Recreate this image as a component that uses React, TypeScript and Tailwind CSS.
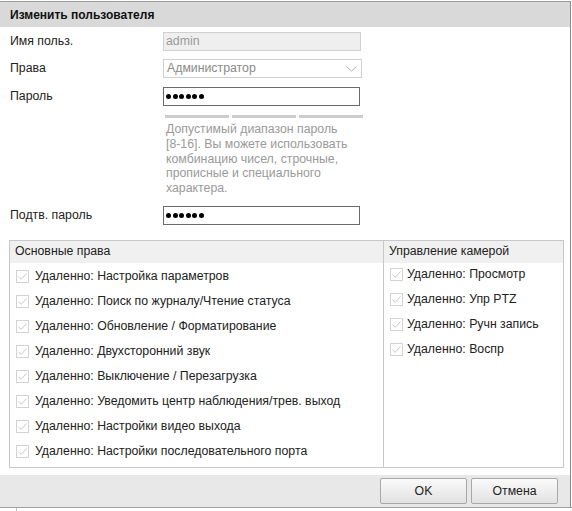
import React from "react";

const basicRights = [
    "Удаленно: Настройка параметров",
    "Удаленно: Поиск по журналу/Чтение статуса",
    "Удаленно: Обновление / Форматирование",
    "Удаленно: Двухсторонний звук",
    "Удаленно: Выключение / Перезагрузка",
    "Удаленно: Уведомить центр наблюдения/трев. выход",
    "Удаленно: Настройки видео выхода",
    "Удаленно: Настройки последовательного порта",
];

const cameraRights = [
    "Удаленно: Просмотр",
    "Удаленно: Упр PTZ",
    "Удаленно: Ручн запись",
    "Удаленно: Воспр",
];

function Check() {
    return (
        <span className="w-[13px] h-[13px] shrink-0 border border-[#d2d2d2] bg-white flex items-center justify-center">
            <svg width="11" height="11" viewBox="0 0 11 11" fill="none">
                <path d="M1.5 5.8 L4.2 8.3 L9.5 2.5" stroke="#c8c8c8" strokeWidth="1" />
            </svg>
        </span>
    );
}

function Dots() {
    return (
        <div className="flex items-center gap-[1.5px] pl-[2px]">
            {[0, 1, 2, 3, 4, 5].map((i) => (
                <span key={i} className="w-[5px] h-[5px] rounded-full bg-black" />
            ))}
        </div>
    );
}

function Row({ label, children }: { label: string; children: React.ReactNode }) {
    return (
        <div className="flex items-center h-[19px]">
            <div className="w-[163px] pl-[10px] text-[#222]">{label}</div>
            {children}
        </div>
    );
}

export default function App() {
    return (
        <div
            className="w-[572px] h-[511px] bg-white overflow-hidden text-[12.3px] leading-[15px] text-[#222]"
            style={{ fontFamily: '"Liberation Sans", Arial, sans-serif' }}
        >
            <div className="mt-[1px] border-t border-[#9a9a9a] border-r w-[571px] h-[506px] border-r-[#8a8a8a] flex flex-col">
                {/* Header */}
                <div className="h-[25px] bg-[#d9d9d9] flex items-center pl-[10px] pt-[1px] font-bold text-[12px] text-[#111]">
                    Изменить пользователя
                </div>

                {/* Form */}
                <div className="mt-[5px] flex flex-col">
                    <Row label="Имя польз.">
                        <div className="w-[198px] h-[19px] bg-[#efefef] border border-[#d0d0d0] flex items-center pl-[2px] text-[#9a9a9a]">
                            admin
                        </div>
                    </Row>
                    <div className="mt-[8px]">
                        <Row label="Права">
                            <div className="w-[199px] h-[19px] bg-white border border-[#d0d0d0] flex items-center justify-between pl-[3px] pr-[4px] text-[#8a8a8a]">
                                <span>Администратор</span>
                                <svg width="11" height="6" viewBox="0 0 11 6" fill="none">
                                    <path d="M0.5 0.5 L5.5 5 L10.5 0.5" stroke="#b0b0b0" strokeWidth="1" />
                                </svg>
                            </div>
                        </Row>
                    </div>
                    <div className="mt-[9px]">
                        <Row label="Пароль">
                            <div className="w-[197px] h-[19px] bg-white border border-[#6a6a6a] flex items-center">
                                <Dots />
                            </div>
                        </Row>
                    </div>

                    <div className="ml-[165px] mt-[9px] flex gap-[3px]">
                        <span className="w-[64px] h-[3px] bg-[#cccccc]" />
                        <span className="w-[64px] h-[3px] bg-[#cccccc]" />
                        <span className="w-[64px] h-[3px] bg-[#cccccc]" />
                    </div>

                    <p className="ml-[166px] mt-[4px] w-[205px] text-[#9a9a9a] leading-[14.8px]">
                        Допустимый диапазон пароль
                        <br />
                        [8-16]. Вы можете использовать
                        <br />
                        комбинацию чисел, строчные,
                        <br />
                        прописные и специального
                        <br />
                        характера.
                    </p>

                    <div className="mt-[10px]">
                        <Row label="Подтв. пароль">
                            <div className="w-[197px] h-[19px] bg-white border border-[#6a6a6a] flex items-center">
                                <Dots />
                            </div>
                        </Row>
                    </div>
                </div>

                {/* Rights table */}
                <div className="ml-[9px] mt-[15px] w-[555px] h-[228px] border border-[#c8c8c8] flex">
                    <div className="w-[373px] flex flex-col">
                        <div className="h-[22px] bg-[#f0f0f0] flex items-center pl-[5px] text-[#222]">
                            Основные права
                        </div>
                        <div className="mt-[1px] flex flex-col">
                            {basicRights.map((r) => (
                                <div key={r} className="h-[25px] flex items-center pl-[6px] gap-[6px]">
                                    <Check />
                                    <span>{r}</span>
                                </div>
                            ))}
                        </div>
                    </div>
                    <div className="flex-1 border-l border-[#c8c8c8] flex flex-col">
                        <div className="h-[22px] bg-[#f0f0f0] flex items-center pl-[5px] text-[#222]">
                            Управление камерой
                        </div>
                        <div className="-mt-[1px] flex flex-col">
                            {cameraRights.map((r) => (
                                <div key={r} className="h-[25px] flex items-center pl-[6px] gap-[4px]">
                                    <Check />
                                    <span>{r}</span>
                                </div>
                            ))}
                        </div>
                    </div>
                </div>

                {/* Footer */}
                <div className="mt-auto h-[32px] bg-[#e8e8e8] flex items-center justify-end gap-[4px] pr-[12px]">
                    <button className="w-[87px] h-[26px] border border-[#a8a8a8] rounded-[2px] bg-gradient-to-b from-[#fafafa] to-[#e2e2e2] text-[#222]">
                        OK
                    </button>
                    <button className="w-[87px] h-[26px] border border-[#a8a8a8] rounded-[2px] bg-gradient-to-b from-[#fafafa] to-[#e2e2e2] text-[#222]">
                        Отмена
                    </button>
                </div>
            </div>
            <div className="border-t border-[#a0a0a0] h-[4px] flex">
                <span className="ml-[16px] w-[1px] h-full bg-[#c0c0c0]" />
            </div>
        </div>
    );
}
